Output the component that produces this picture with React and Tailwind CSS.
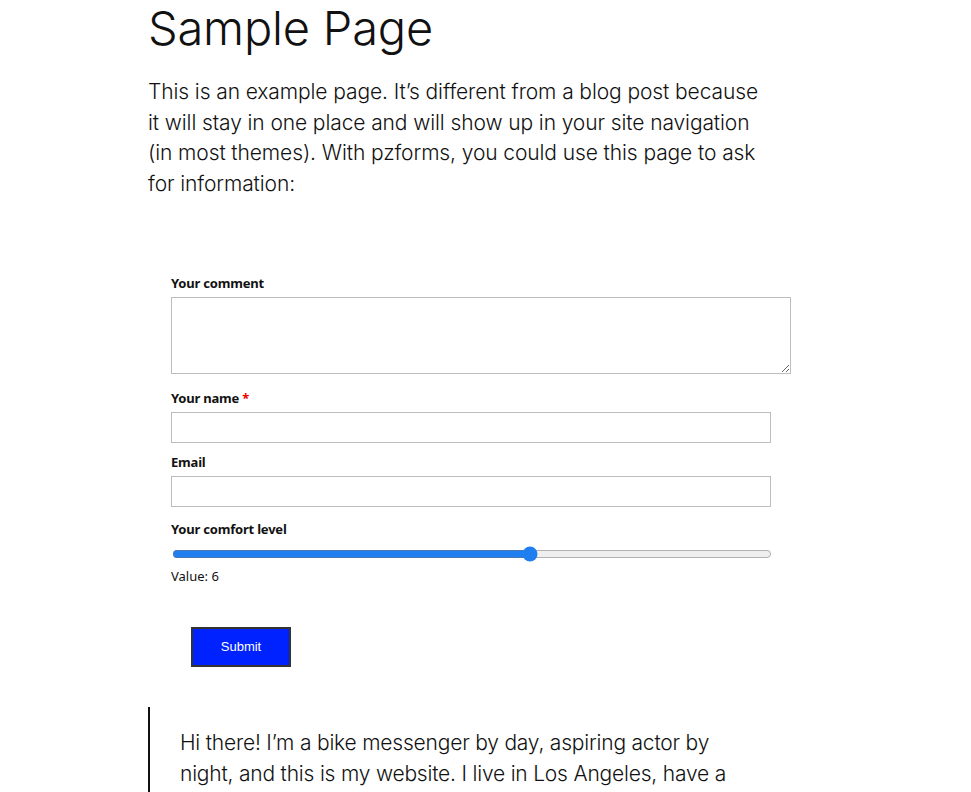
import React, { useState } from "react";

export default function App() {
  const [comfort, setComfort] = useState(6);

  const labelCls = "block text-[13px] font-bold text-[#111] mb-[5px] leading-[18px] tracking-[-0.2px]";
  const fieldCls = "block h-[31px] w-[600px] border border-[#bdbdbd] bg-white px-2 text-sm outline-none";

  return (
    <div className="min-h-screen bg-white text-[#111]" style={{ fontFamily: "Inter, 'Noto Sans', sans-serif" }}>
      <div className="ml-[148px] w-[640px]">
        <h1 className="-mt-[3px] text-[47px] font-light leading-[62px] tracking-[-0.2px]">Sample Page</h1>

        <p className="mt-[18px] w-[625px] text-[21px] font-light leading-[30.7px] tracking-[-0.1px]">
          This is an example page. It’s different from a blog post because it will stay in one place and will show up in your site navigation (in most themes). With pzforms, you could use this page to ask for information:
        </p>

        <form
          className="mt-[74px] pl-[23px]"
          style={{ fontFamily: "'Noto Sans', 'Open Sans', sans-serif" }}
          onSubmit={(e) => e.preventDefault()}
        >
          <label className={labelCls}>Your comment</label>
          <textarea className="block h-[77px] w-[620px] border border-[#bdbdbd] bg-white p-2 text-sm outline-none" />

          <label className={`${labelCls} mt-[15px]`}>
            Your name <span className="text-[#e00]">*</span>
          </label>
          <input type="text" className={fieldCls} />

          <label className={`${labelCls} mt-[10px]`}>Email</label>
          <input type="email" className={fieldCls} />

          <label className={`${labelCls} mt-[13px]`}>Your comfort level</label>
          <input
            type="range"
            min="0"
            max="10"
            value={comfort}
            onChange={(e) => setComfort(Number(e.target.value))}
            className="mt-[8px] ml-[1px] block w-[600px] accent-[#1f7ff0]"
          />
          <div className="mt-[5px] text-[13px] leading-[18px]">Value: {comfort}</div>

          <button
            type="submit"
            className="mt-[42px] ml-[20px] h-[40px] w-[100px] border-2 border-[#333] bg-[#0022ff] text-[13px] font-normal text-white"
            style={{ fontFamily: "'Liberation Sans', Arial, sans-serif" }}
          >
            Submit
          </button>
        </form>

        <blockquote className="mt-[40px] border-l-2 border-[#111] pl-[30px] pt-[21px]">
          <p className="w-[570px] text-[21px] font-light leading-[30.7px] tracking-[-0.2px]">
            Hi there! I’m a bike messenger by day, aspiring actor by night, and this is my website. I live in Los Angeles, have a great dog named Jack, and I like piña coladas. (And gettin’ caught in the rain.)
          </p>
        </blockquote>
      </div>
    </div>
  );
}
